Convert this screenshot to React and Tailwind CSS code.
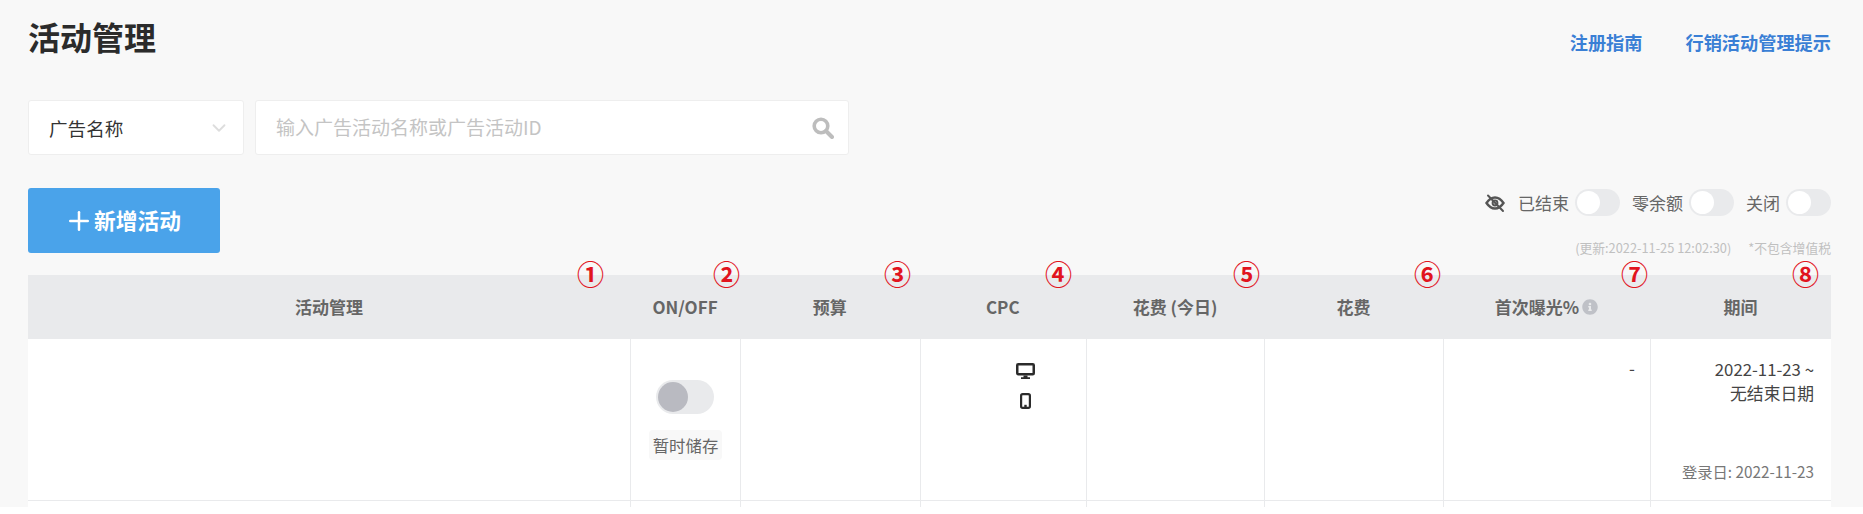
import React from "react";
import { FaInfoCircle } from "react-icons/fa";
import { LuChevronDown, LuPlus } from "react-icons/lu";

const font = { fontFamily: '"Noto Sans CJK SC", "Noto Sans", sans-serif' };

function Mark({ children, className }) {
  return (
    <span className={`absolute top-[-16px] text-[27px] leading-[30px] font-bold text-[#e1141e] ${className}`}>{children}</span>
  );
}

function Toggle({ label }) {
  return (
    <div className="flex items-center gap-[6px]">
      <span className="text-[17px] leading-[27px] text-[#666]">{label}</span>
      <span className="w-[45px] h-[27px] rounded-full bg-[#e9eaec] p-[2px] flex">
        <span className="w-[23px] h-[23px] rounded-full bg-white" />
      </span>
    </div>
  );
}

function EyeOff() {
  return (
    <svg viewBox="0 0 20 20" className="w-[20px] h-[20px] text-[#555]" fill="none" stroke="currentColor">
      <path d="M1.5 10 C4.5 5.5 7 4.5 10 4.5 C13 4.5 15.5 5.5 18.5 10 C15.5 14.5 13 15.5 10 15.5 C7 15.5 4.5 14.5 1.5 10 Z" strokeWidth="2.4" />
      <circle cx="10" cy="10" r="2.4" strokeWidth="2" />
      <path d="M3 2.5 L18 18" strokeWidth="2" strokeLinecap="round" />
    </svg>
  );
}

function SearchIcon() {
  return (
    <svg viewBox="0 0 22 22" className="w-[22px] h-[22px] text-[#bdbdbd]" fill="none" stroke="currentColor">
      <circle cx="9" cy="9" r="6.8" strokeWidth="3.6" />
      <path d="M14 14 L20 20" strokeWidth="4" strokeLinecap="round" />
    </svg>
  );
}

function Monitor() {
  return (
    <svg viewBox="0 0 19 16" className="w-[19px] h-[16px] text-[#2b2b2b]" fill="none">
      <rect x="1.25" y="1.25" width="16.5" height="10" rx="1" stroke="currentColor" strokeWidth="2.5" />
      <path d="M7.5 12.5 H11.5 V14.2 H14 V16 H5 V14.2 H7.5 Z" fill="currentColor" />
    </svg>
  );
}

function Phone() {
  return (
    <svg viewBox="0 0 11 16" className="w-[11px] h-[16px] text-[#2b2b2b]" fill="none">
      <rect x="1.1" y="1.1" width="8.8" height="13.8" rx="1.6" stroke="currentColor" strokeWidth="2.2" />
      <rect x="4.3" y="11.8" width="2.4" height="2.4" fill="currentColor" />
    </svg>
  );
}

const headCell = "flex items-center justify-center text-[17px] font-bold text-[#666]";
const bodyCell = "border-l border-[#e9eaec]";
const columns = "grid grid-cols-[602px_110px_179.5px_166.5px_178px_179px_207px_181px]";

export default function App() {
  return (
    <div style={font} className="h-[507px] bg-[#f8f8f8] overflow-hidden pl-[28px] pr-[32px]">
      <div className="flex justify-between pt-[13px] h-[100px]">
        <h1 className="text-[32px] leading-[46px] font-bold text-[#2b2b2b]">活动管理</h1>
        <div className="flex gap-[43px] text-[18.2px] leading-[26px] font-bold text-[#3a7fd5] pt-[16px]">
          <a>注册指南</a>
          <a>行销活动管理提示</a>
        </div>
      </div>

      <div className="flex gap-[11px] h-[55px]">
        <div className="w-[216px] bg-white border border-[#eeeeee] rounded-[3px] flex items-center justify-between pl-[20px] pr-[13px]">
          <span className="text-[18.6px] text-[#333]">广告名称</span>
          <LuChevronDown className="w-[22px] h-[22px] text-[#dddddd]" />
        </div>
        <div className="w-[594px] bg-white border border-[#eeeeee] rounded-[3px] flex items-center justify-between pl-[20px] pr-[14px]">
          <span className="text-[19px] text-[#c4c4c4]">输入广告活动名称或广告活动ID</span>
          <SearchIcon />
        </div>
      </div>

      <div className="flex justify-between mt-[33px] h-[87px]">
        <button className="w-[192px] h-[65px] bg-[#4aa3ea] rounded-[3px] text-white text-[21.7px] font-bold flex items-center justify-center pr-[3px]">
          <LuPlus className="w-[30px] h-[30px]" />
          新增活动
        </button>
        <div className="flex flex-col items-end pt-[1px]">
          <div className="flex items-center gap-[12px]">
            <div className="flex items-center gap-[13px]">
              <EyeOff />
              <Toggle label="已结束" />
            </div>
            <Toggle label="零余额" />
            <Toggle label="关闭" />
          </div>
          <div className="flex gap-[17px] mt-[22px] text-[12.8px] leading-[20px] text-[#c0c0c0]">
            <span>(更新:2022-11-25 12:02:30)</span>
            <span>*不包含增值税</span>
          </div>
        </div>
      </div>

      <div className="w-[1803px]">
        <div className={`${columns} relative h-[64px] bg-[#e9eaec]`}>
          <div className={headCell}>活动管理</div>
          <div className={headCell}>ON/OFF</div>
          <div className={headCell}>预算</div>
          <div className={headCell}>CPC</div>
          <div className={headCell}>花费 (今日)</div>
          <div className={headCell}>花费</div>
          <div className={`${headCell} gap-[3px]`}>
            首次曝光%
            <FaInfoCircle className="w-[16px] h-[16px] text-[#bfc1c7]" />
          </div>
          <div className={headCell}>期间</div>
          <Mark className="left-[549px]">①</Mark>
          <Mark className="left-[685px]">②</Mark>
          <Mark className="left-[856px]">③</Mark>
          <Mark className="left-[1017px]">④</Mark>
          <Mark className="left-[1205px]">⑤</Mark>
          <Mark className="left-[1386px]">⑥</Mark>
          <Mark className="left-[1593px]">⑦</Mark>
          <Mark className="left-[1764px]">⑧</Mark>
        </div>

        <div className={`${columns} h-[162px] bg-white border-b border-[#e9eaec]`}>
          <div />
          <div className={`${bodyCell} flex flex-col items-center pt-[41px]`}>
            <span className="w-[58px] h-[34px] rounded-full bg-[#e9eaec] p-[2px] flex mr-[2px]">
              <span className="w-[30px] h-[30px] rounded-full bg-[#b9bac1]" />
            </span>
            <span className="mt-[16px] px-[4px] h-[30px] leading-[30px] rounded-[4px] bg-[#f8f8f8] text-[16.4px] text-[#666]">暂时储存</span>
          </div>
          <div className={bodyCell} />
          <div className={`${bodyCell} flex flex-col items-center pt-[24px] gap-[14px] pl-[45px]`}>
            <Monitor />
            <Phone />
          </div>
          <div className={bodyCell} />
          <div className={bodyCell} />
          <div className={`${bodyCell} text-right pt-[16px] pr-[15px] text-[17px] text-[#444]`}>-</div>
          <div className={`${bodyCell} flex flex-col items-end justify-between pt-[18px] pb-[17px] pr-[17px]`}>
            <div className="text-right text-[16.8px] leading-[24px] text-[#444]">
              <div>2022-11-23 ~</div>
              <div>无结束日期</div>
            </div>
            <div className="text-[15.3px] leading-[24px] text-[#777]">登录日: 2022-11-23</div>
          </div>
        </div>

        <div className={`${columns} h-[6px] bg-white`}>
          <div />
          <div className={bodyCell} />
          <div className={bodyCell} />
          <div className={bodyCell} />
          <div className={bodyCell} />
          <div className={bodyCell} />
          <div className={bodyCell} />
          <div className={bodyCell} />
        </div>
      </div>
    </div>
  );
}
